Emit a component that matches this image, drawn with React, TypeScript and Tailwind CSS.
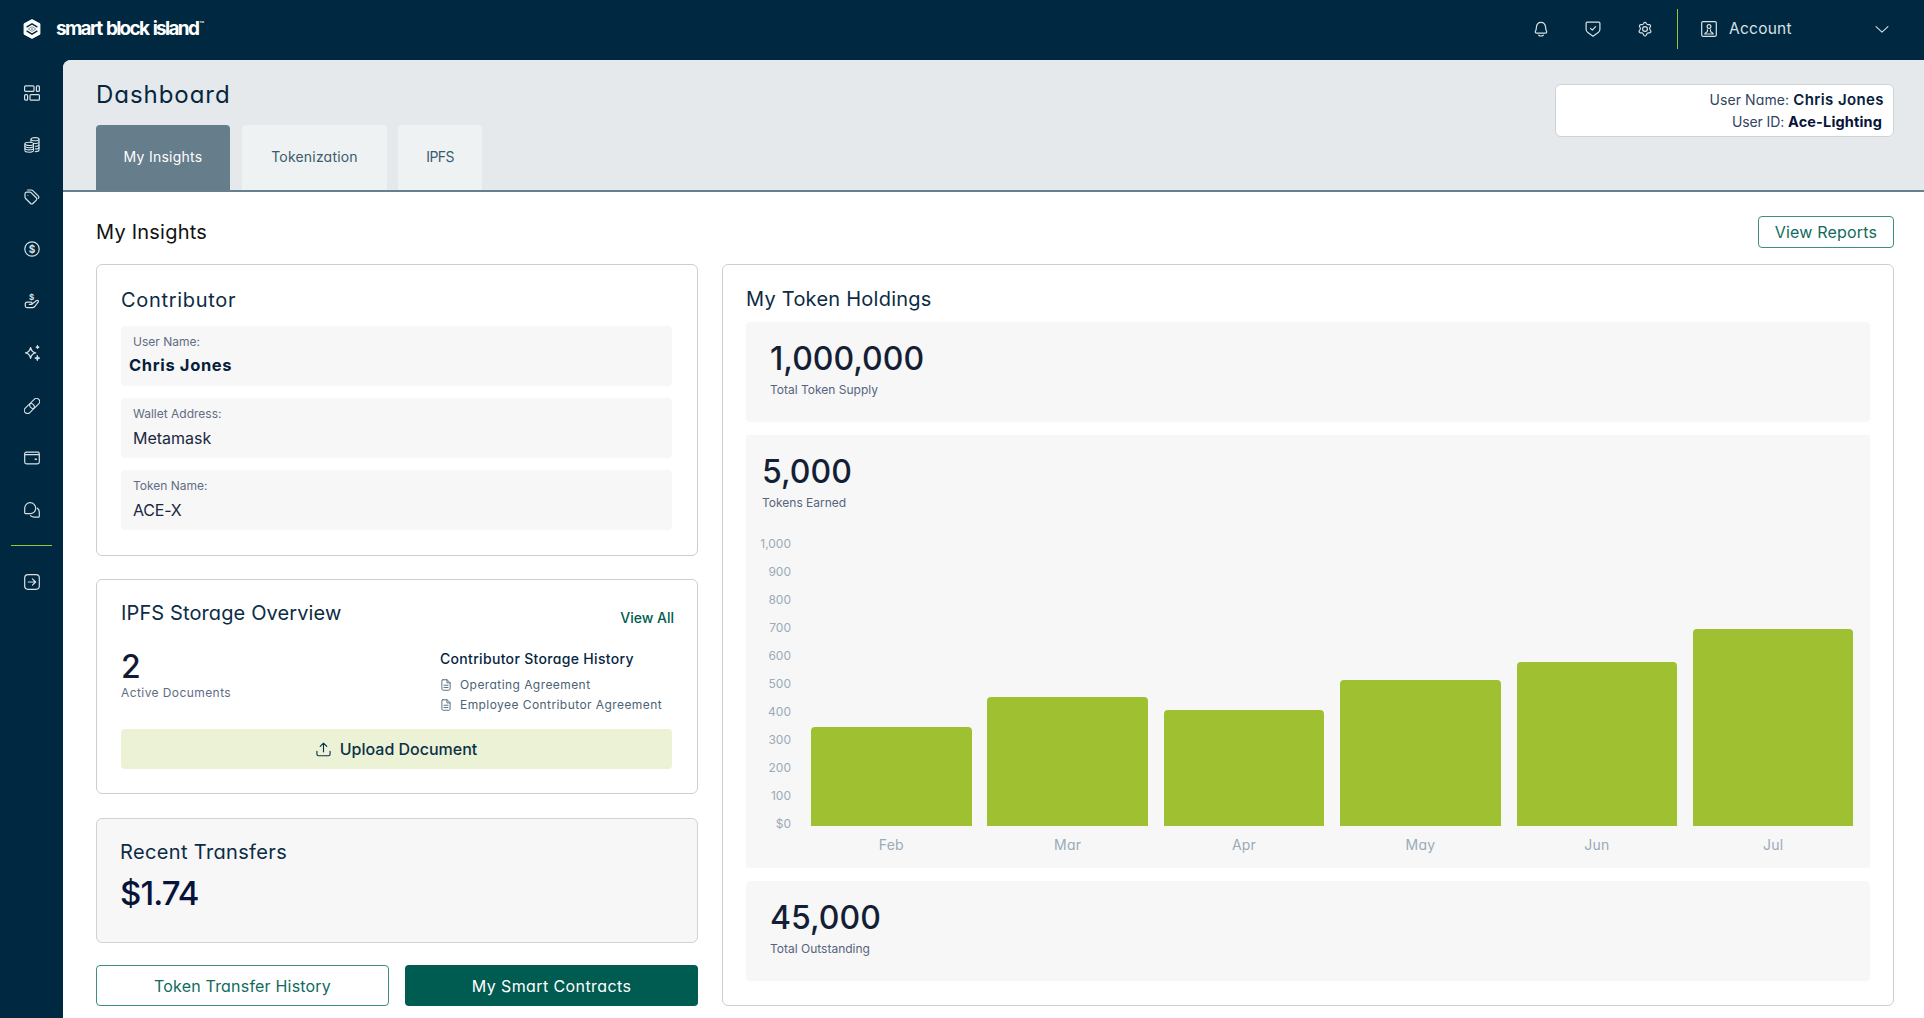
import { ReactNode } from "react";

// single-storey "a" for headings, buttons and axis labels
const GEO = "font-['Inter',sans-serif] [font-feature-settings:'cv11']";

function Icon({ children, size = 16 }: { children: ReactNode; size?: number }) {
  return (
    <svg
      width={size}
      height={size}
      viewBox="0 0 16 16"
      fill="none"
      stroke="currentColor"
      strokeWidth={1.2}
      strokeLinecap="round"
      strokeLinejoin="round"
      className="shrink-0"
    >
      {children}
    </svg>
  );
}

const navIcons = [
  {
    name: "Dashboard",
    paths: (
      <>
        <rect x="0.6" y="0.8" width="9.4" height="5.6" rx="1" />
        <rect x="12.4" y="0.8" width="3" height="5.6" rx="1" />
        <rect x="0.6" y="9.6" width="3" height="5.6" rx="1" />
        <rect x="6" y="9.6" width="9.4" height="5.6" rx="1" />
      </>
    ),
  },
  {
    name: "Tokens",
    paths: (
      <g strokeWidth="1.1">
        <ellipse cx="5.2" cy="6.9" rx="4.3" ry="1.6" />
        <path d="M.9 6.9v6.6c0 .9 1.9 1.7 4.3 1.7s4.3-.8 4.3-1.7V6.9" />
        <path d="M.9 9.1c0 .9 1.9 1.6 4.3 1.6s4.3-.7 4.3-1.6M.9 11.3c0 .9 1.9 1.6 4.3 1.6s4.3-.7 4.3-1.6" />
        <ellipse cx="11" cy="2.2" rx="4" ry="1.6" />
        <path d="M7 2.2v2.4M15 2.2v10.7c0 .9-1.400 1.700-3.700 1.700" />
        <path d="M9.400 6.500c3 .3 5.600-.4 5.600-1.600M11.400 9.200c2.100 0 3.600-.6 3.600-1.500M11.400 11.900c2.100 0 3.600-.6 3.600-1.500" />
      </g>
    ),
  },
  {
    name: "Tags",
    paths: (
      <>
        <path d="M1 4.9v3.2c0 .5.2 1 .6 1.4l5 5a1.6 1.6 0 0 0 2.3 0l3.4-3.4a1.6 1.6 0 0 0 0-2.3l-5-5a2 2 0 0 0-1.4-.6H2.7A1.7 1.7 0 0 0 1 4.9z" />
        <path d="M3.6 1h3.8c.5 0 1 .2 1.4.6l5.6 5.5a1.6 1.6 0 0 1 0 2.3" />
        <circle cx="4" cy="6.2" r=".5" fill="currentColor" stroke="none" />
      </>
    ),
  },
  {
    name: "Pricing",
    paths: (
      <>
        <circle cx="8" cy="8" r="7.2" />
        <text
          x="8"
          y="11.7"
          textAnchor="middle"
          fill="currentColor"
          stroke="none"
          className="font-['Inter',sans-serif] text-[10px] font-bold"
        >
          $
        </text>
      </>
    ),
  },
  {
    name: "Payouts",
    paths: (
      <>
        <text
          x="7.5"
          y="6.7"
          textAnchor="middle"
          fill="currentColor"
          stroke="none"
          className="font-['Inter',sans-serif] text-[8px] font-bold"
        >
          $
        </text>
        <path d="M1.3 10.8c0-1 .8-1.7 1.8-1.7h3.5c1.9 0 2.1 2.3.2 2.3H5.3" />
        <path d="M8 11l4.6-3.4c1.3-.9 2.5.3 1.5 1.5l-3.3 4.4c-.7.8-1.4 1.2-2.4 1.2H3.1c-1 0-1.8-.8-1.8-1.8v-2.1" />
      </>
    ),
  },
  {
    name: "Highlights",
    paths: (
      <>
        <path
          d="M6.6 2.6c.6 3.1 1.9 4.6 5 5.3-3.1.7-4.4 2.2-5 5.3-.6-3.1-1.9-4.6-5-5.3 3.1-.7 4.4-2.2 5-5.3z"
          strokeWidth="1.4"
        />
        <path
          d="M13.5.5l.5 1.2 1.2.5-1.2.5-.5 1.2-.5-1.2-1.2-.5 1.2-.5zM13.3 10.6l.7 1.900 1.800.6-1.800.7-.7 1.900-.6-1.900-1.900-.7 1.900-.6z"
          fill="currentColor"
          strokeWidth=".9"
        />
      </>
    ),
  },
  {
    name: "Links",
    paths: (
      <g transform="rotate(-45 8 8)" strokeWidth="1.1">
        <rect x="-1.5" y="4.8" width="11.4" height="6.4" rx="3.2" />
        <rect x="6.1" y="4.8" width="11.4" height="6.4" rx="3.2" />
      </g>
    ),
  },
  {
    name: "Wallet",
    paths: (
      <>
        <path d="M.7 4.6V12c0 1 .8 1.8 1.8 1.8h11c1 0 1.8-.8 1.8-1.8V4.6z" />
        <path d="M.7 4.6v-.7c0-1 .7-1.7 1.7-1.7h11.8c.5 0 .9.4.9.9v1.5" />
        <path d="M11.2 9.2h1.200" strokeWidth="1.5" />
      </>
    ),
  },
  {
    name: "Messages",
    paths: (
      <>
        <path d="M.7 6.2a5.5 5.5 0 1 1 5.5 5.5H1.6a.9.9 0 0 1-.9-.9z" />
        <path d="M13.4 6.2c1.2 1 1.9 2.3 1.9 3.9v4.2c0 .5-.4.9-.9.9h-4c-1.8 0-3-.6-3.9-1.5" />
      </>
    ),
  },
];

const bars = [
  { month: "Feb", height: 99 },
  { month: "Mar", height: 129.5 },
  { month: "Apr", height: 116.5 },
  { month: "May", height: 146.5 },
  { month: "Jun", height: 164.5 },
  { month: "Jul", height: 197.5 },
];

const ticks = ["1,000", "900", "800", "700", "600", "500", "400", "300", "200", "100", "$0"];

function Logo() {
  return (
    <svg width="18" height="20" viewBox="0 0 18 20" className="shrink-0">
      <path
        d="M9 .6l7.9 4.2v10.4L9 19.4l-7.900-4.200V4.800z"
        fill="#fff"
        stroke="#fff"
        strokeWidth="1"
        strokeLinejoin="round"
      />
      <path
        d="M3.6 8.2L9 4.9l5.4 3.3M3.6 11.8L9 15.1l5.4-3.3"
        fill="none"
        stroke="#002840"
        strokeWidth="1.4"
      />
      <path d="M5.3 10L9 7.7l3.7 2.3L9 12.3z" fill="none" stroke="#002840" strokeWidth=".5" />
      <circle cx="9" cy="10" r=".7" fill="#002840" />
    </svg>
  );
}

function TopBar() {
  return (
    <header className="flex h-[60px] shrink-0 items-center pb-[3px] text-[#d9e1e5]">
      <div className="flex items-center pl-[22.5px]">
        <Logo />
        <span className="ml-[15.5px] flex items-start text-[19px] leading-6 font-bold tracking-[-1.7px] text-white [word-spacing:1.5px]">
          smart block island
          <span className="ml-[1px] text-[8px] leading-[15px] font-normal tracking-normal">™</span>
        </span>
      </div>
      <div className="ml-auto flex items-center">
        <div className="flex items-center gap-9">
          <Icon>
            <path d="M8 1.3c-2.9 0-4.3 2.2-4.6 5l-.3 2.3c-.1.5-.3.9-.6 1.4-.6 1 0 2.2 1.2 2.2h8.6c1.2 0 1.8-1.2 1.2-2.2-.3-.5-.5-.9-.6-1.4l-.3-2.3c-.3-2.8-1.7-5-4.6-5z" />
            <path d="M5.7 14.2c.6.5 1.4.8 2.3.8s1.7-.3 2.3-.8" />
          </Icon>
          <Icon>
            <path d="M2.2 1.1h11.6c.6 0 1.1.5 1.1 1.1v6c0 1.4-.6 2.5-1.7 3.4L8 15.2l-5.2-3.6A4.1 4.1 0 0 1 1.1 8.2v-6c0-.6.5-1.1 1.1-1.1z" />
            <path d="M5.5 7.3l1.8 1.8 3.3-3.4" />
          </Icon>
          <Icon>
            <path
              d="M6.5 2l.4-.8c.4-.8 1.8-.8 2.2 0l.4.8c.3.5.8.8 1.4.8h1.3c1 0 1.7 1.2 1.2 2l-.6 1.1c-.3.5-.3 1.1 0 1.6l.9 1.4c.5.8 0 2-1.1 2.1l-1.4.1c-.6.1-1 .4-1.3.9l-.7 1.5c-.5.9-1.9.9-2.4 0l-.7-1.500c-.3-.5-.7-.8-1.3-.9l-1.4-.1c-1.1-.1-1.600-1.300-1.100-2.100l.9-1.400c.3-.5.3-1.100 0-1.600l-.6-1.100c-.5-.8.2-2 1.200-2h1.300c.6 0 1.100-.3 1.400-.8z"
              transform="translate(0 .8)"
            />
            <circle cx="8" cy="8" r="2.4" />
          </Icon>
        </div>
        <div className="ml-6 h-10 w-px bg-[#a0c131]" />
        <button className="ml-[23px] flex items-center">
          <Icon>
            <rect x=".7" y=".7" width="14.6" height="14.6" rx="1.2" />
            <circle cx="8" cy="5.6" r="1.9" />
            <path d="M3.8 13c.5-1.1 1.5-1.5 2.4-2.3.5-.5.5-1.2.2-1.9M12.2 13c-.5-1.1-1.5-1.5-2.4-2.3-.5-.5-.5-1.2-.2-1.9M3.8 13h8.4" />
          </Icon>
          <span
            className={`${GEO} ml-3 w-[146px] text-left text-[15.5px] leading-6 tracking-[0.25px]`}
          >
            Account
          </span>
          <Icon size={14}>
            <path d="M1.2 5.2L8 11.6l6.8-6.4" />
          </Icon>
        </button>
      </div>
      <div className="w-[35px]" />
    </header>
  );
}

function Sidebar() {
  return (
    <nav className="flex w-[63px] shrink-0 flex-col items-center pt-[24.5px] text-[#d9e1e5]">
      <div className="flex flex-col gap-[36.2px]">
        {navIcons.map((item) => (
          <button key={item.name} aria-label={item.name}>
            <Icon>{item.paths}</Icon>
          </button>
        ))}
      </div>
      <div className="mt-[26.5px] h-px w-[41px] bg-[#a0c131]" />
      <button aria-label="Log out" className="mt-7">
        <Icon>
          <rect x=".7" y=".7" width="14.6" height="14.6" rx="3.2" />
          <path d="M4.3 8h7.200M8.400 4.800L11.600 8l-3.200 3.200" />
        </Icon>
      </button>
    </nav>
  );
}

function PageHeader() {
  return (
    <div className="flex h-[132px] shrink-0 justify-between border-b-2 border-[#67808f] bg-[#e5e9ec] pr-[30px] pl-[33px]">
      <div className="flex flex-col">
        <h1 className={`${GEO} mt-[19px] text-[24px] leading-8 tracking-[0.95px] text-[#06263f]`}>
          Dashboard
        </h1>
        <div className={`${GEO} mt-[14px] flex h-[65px] text-[14px] text-[#3c5a6e]`}>
          <button className="mr-3 w-[134px] rounded-t bg-[#667d8b] pb-[2px] tracking-[0.25px] text-white">
            My Insights
          </button>
          <button className="mr-[11px] w-[145px] rounded-t bg-[#eef2f3] pb-[2px] tracking-[0.2px]">
            Tokenization
          </button>
          <button className="w-[84px] rounded-t bg-[#eef2f3] pb-[2px] tracking-[-0.6px]">
            IPFS
          </button>
        </div>
      </div>
      <div
        className={`${GEO} mt-[24px] flex h-[53px] w-[339px] flex-col items-end rounded-md border border-[#cdd3d6] bg-white pt-[4px] pr-[9px] text-[14px] leading-[22px] tracking-[0.1px] text-[#33445f]`}
      >
        <p>
          User Name:{" "}
          <b className="text-[15px] font-semibold tracking-[0.4px] text-[#06203b]">Chris Jones</b>
        </p>
        <p className="pr-[2px] tracking-[-0.1px]">
          User ID:{" "}
          <b className="text-[14.5px] font-bold tracking-[0.15px] text-[#06143b]">Ace-Lighting</b>
        </p>
      </div>
    </div>
  );
}

function Field({ label, children }: { label: string; children: ReactNode }) {
  return (
    <div className="h-[60.3px] rounded bg-[#f7f7f7] pt-[8px] pl-[12px]">
      <p className="text-[12px] leading-4 text-[#5f6c84]">{label}</p>
      {children}
    </div>
  );
}

function ContributorCard() {
  return (
    <section className="h-[291.5px] rounded-md border border-[#c9d0d2] bg-white px-6 pt-[21px]">
      <h3 className={`${GEO} mb-[11.5px] text-[20px] leading-7 tracking-[0.7px] text-[#0b2c45]`}>
        Contributor
      </h3>
      <div className="flex w-[551px] flex-col gap-3">
        <Field label="User Name:">
          <p
            className={`${GEO} -ml-1 text-[16.5px] leading-[30px] font-bold tracking-[0.65px] text-[#06203b]`}
          >
            Chris Jones
          </p>
        </Field>
        <Field label="Wallet Address:">
          <p className="text-[16px] leading-8 text-[#1b2740]">Metamask</p>
        </Field>
        <Field label="Token Name:">
          <p className="text-[16px] leading-8 tracking-[-0.2px] text-[#1b2740]">ACE-X</p>
        </Field>
      </div>
    </section>
  );
}

function DocumentLink({ children }: { children: ReactNode }) {
  return (
    <li className="flex items-center gap-2">
      <Icon size={12}>
        <path d="M3.8 1h5.7l4 4v8.2c0 1-.8 1.8-1.8 1.8H4.3c-1 0-1.8-.8-1.8-1.8V2.3C2.5 1.6 3.1 1 3.8 1zM9.3 1v4.200h4.200M5.300 8.300h5.400M5.300 11.300h5.400" />
      </Icon>
      {children}
    </li>
  );
}

function StorageCard() {
  return (
    <section className="mt-[23.5px] h-[215px] rounded-md border border-[#c9d0d2] bg-white pr-[23px] pl-6">
      <div className="flex justify-between pt-[19px]">
        <h3 className={`${GEO} text-[20px] leading-7 tracking-[0.12px] text-[#0b2c45]`}>
          IPFS Storage Overview
        </h3>
        <a href="#" className="pt-[9px] text-[14px] leading-5 font-medium text-[#005b50]">
          View All
        </a>
      </div>
      <div className="flex h-[83px]">
        <div className="w-[319px] pt-[19px]">
          <p className="text-[32px] leading-10 font-medium text-[#101b33]">2</p>
          <p
            className={`${GEO} -mt-[2px] text-[12px] leading-4 tracking-[0.42px] text-[#5f6c84]`}
          >
            Active Documents
          </p>
        </div>
        <div className={`${GEO} pt-[21px]`}>
          <h4 className="text-[14px] leading-5 font-medium tracking-[0.32px] text-[#06263f]">
            Contributor Storage History
          </h4>
          <ul className="mt-[6px] text-[12px] leading-5 tracking-[0.43px] text-[#4b6374]">
            <DocumentLink>Operating Agreement</DocumentLink>
            <DocumentLink>Employee Contributor Agreement</DocumentLink>
          </ul>
        </div>
      </div>
      <button className="mt-[18px] flex h-10 w-[551px] items-center justify-center gap-[9px] rounded bg-[#ecf2d6] text-[16px] font-medium text-[#0b3048]">
        <Icon size={15}>
          <path d="M8 10.500V1.200M4.500 4.600L8 1.200l3.500 3.400M1 9.800v3.200c0 .9.700 1.600 1.600 1.600h10.800c.9 0 1.600-.7 1.600-1.600V9.800" />
        </Icon>
        Upload Document
      </button>
    </section>
  );
}

function TransfersCard() {
  return (
    <section
      className={`${GEO} mt-[23.5px] h-[125px] rounded-md border border-[#cdd3d6] bg-[#f7f7f7] px-[23px] pt-[19px]`}
    >
      <h3 className="text-[20px] leading-7 tracking-[0.35px] text-[#0b2c45]">Recent Transfers</h3>
      <p className="mt-[7px] text-[33px] leading-10 font-medium tracking-[-0.9px] text-[#06143b]">
        $1.74
      </p>
    </section>
  );
}

function EarningsChart() {
  return (
    <div className={`${GEO} mt-[19px] flex text-[#9aabb7]`}>
      <ul className="w-[38px] text-right text-[12px] leading-[28px]">
        {ticks.map((tick) => (
          <li key={tick}>{tick}</li>
        ))}
      </ul>
      <div className="ml-5 flex h-[334px] gap-[15.9px]">
        {bars.map((bar) => (
          <div key={bar.month} className="flex w-[160.5px] flex-col justify-end">
            <div className="rounded-t bg-[#9fc131]" style={{ height: bar.height }} />
            <p className="h-[38px] pt-[9px] text-center text-[14px] leading-5 tracking-[0.2px]">
              {bar.month}
            </p>
          </div>
        ))}
      </div>
    </div>
  );
}

function Stat({ value, label }: { value: string; label: string }) {
  return (
    <>
      <p className="-ml-px text-[32px] leading-10 font-medium text-[#141f36]">{value}</p>
      <p className="mt-[3px] -ml-px text-[12px] leading-4 text-[#56647d]">{label}</p>
    </>
  );
}

function HoldingsCard() {
  return (
    <section className="flex h-[742px] flex-1 flex-col rounded-md border border-[#c9d0d2] bg-white px-[23px] pt-[19.5px]">
      <h3 className={`${GEO} mb-[9.5px] text-[20px] leading-7 tracking-[0.25px] text-[#0b2c45]`}>
        My Token Holdings
      </h3>
      <div className="h-[100px] rounded bg-[#f7f7f7] pt-[17px] pl-[25px]">
        <Stat value="1,000,000" label="Total Token Supply" />
      </div>
      <div className="mt-[13px] h-[433px] bg-[#f7f7f7] pt-[17px] pl-[17px]">
        <Stat value="5,000" label="Tokens Earned" />
        <div className="-ml-[10px]">
          <EarningsChart />
        </div>
      </div>
      <div className="mt-[13px] h-[100px] rounded bg-[#f7f7f7] pt-[17px] pl-[25px]">
        <Stat value="45,000" label="Total Outstanding" />
      </div>
    </section>
  );
}

export default function App() {
  return (
    <div className="flex h-[1018px] w-full flex-col overflow-hidden bg-[#002840] font-['Inter',sans-serif]">
      <TopBar />
      <div className="flex min-h-0 flex-1">
        <Sidebar />
        <main className="flex min-w-0 flex-1 flex-col overflow-hidden rounded-tl-lg bg-white">
          <PageHeader />
          <div className="pr-[30px] pl-[33px]">
            <div className={`${GEO} flex h-[72px] items-center justify-between pt-[8px]`}>
              <h2 className="text-[20px] leading-7 tracking-[0.22px] text-[#111]">My Insights</h2>
              <button className="h-8 w-[136px] rounded border border-[#3f8e83] text-[16px] tracking-[0.2px] text-[#0f6b5e]">
                View Reports
              </button>
            </div>
            <div className="flex gap-6">
              <div className="w-[602px]">
                <ContributorCard />
                <StorageCard />
                <TransfersCard />
                <div className={`${GEO} mt-[22.5px] flex text-[16px]`}>
                  <button className="mr-4 h-[41px] w-[293px] rounded border border-[#3f8e83] tracking-[0.2px] text-[#0f6b5e]">
                    Token Transfer History
                  </button>
                  <button className="h-[41px] flex-1 rounded bg-[#005b50] tracking-[0.4px] text-white">
                    My Smart Contracts
                  </button>
                </div>
              </div>
              <HoldingsCard />
            </div>
          </div>
        </main>
      </div>
    </div>
  );
}
